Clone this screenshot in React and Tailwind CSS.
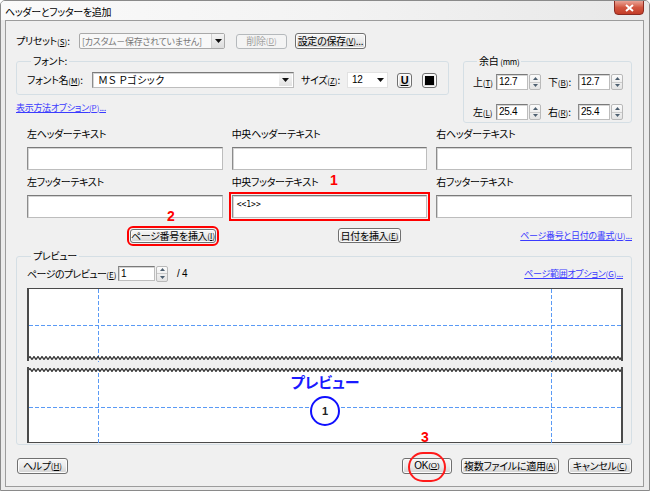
import React from "react";

// wavy edge used by the preview boxes (period 4px)
const WAVE = (() => {
  let d = "M0,3";
  for (let i = 0; i < 150; i++) d += " q1,-2.6 2,0 q1,2.6 2,0";
  return d;
})();

function Mn({ k }) {
  return (
    <span className="text-[8px] tracking-normal">
      (<span className="underline">{k}</span>)
    </span>
  );
}

function Btn({ className = "", disabled = false, children }) {
  return (
    <div
      className={`flex items-center justify-center rounded-[3px] border whitespace-nowrap ${
        disabled
          ? "border-[#b5b9bc] bg-[#f4f4f4] text-[#a0a0a0]"
          : "border-[#707070] bg-linear-to-b from-[#f6f6f6] via-[#ebebeb] to-[#d3d3d3] shadow-[inset_0_0_0_1px_#fcfcfc]"
      } ${className}`}
    >
      {children}
    </div>
  );
}

function Field({ className = "", children }) {
  return (
    <div
      className={`bg-white border border-[#bdbdbd] border-t-[#7a7a7a] border-l-[#8c8c8c] shadow-[inset_1px_1px_0_#d4d4d4] ${className}`}
    >
      {children}
    </div>
  );
}

function Arrow() {
  return (
    <svg width="7" height="4" viewBox="0 0 7 4">
      <path d="M0 0H7L3.5 4Z" fill="#111" />
    </svg>
  );
}

function Spin() {
  return (
    <div className="ml-[1px] w-[12px] h-[16px] flex flex-col border border-[#b9b9b9] rounded-[2px] bg-linear-to-b from-[#fbfbfb] to-[#e4e4e4]">
      <div className="flex-1 flex items-center justify-center border-b border-[#cccccc]">
        <svg width="5" height="3" viewBox="0 0 5 3">
          <path d="M0 3L2.5 0L5 3Z" fill="#4d5f70" />
        </svg>
      </div>
      <div className="flex-1 flex items-center justify-center">
        <svg width="5" height="3" viewBox="0 0 5 3">
          <path d="M0 0L2.5 3L5 0Z" fill="#4d5f70" />
        </svg>
      </div>
    </div>
  );
}

function Dashes({ v1, v2, h, height }) {
  return (
    <svg className="absolute inset-0" width="592" height={height}>
      <g stroke="#5a9af5" strokeWidth="1" strokeDasharray="4 2">
        <line x1={v1} y1="0" x2={v1} y2={height} />
        <line x1={v2} y1="0" x2={v2} y2={height} />
        <line x1="0" y1={h} x2="592" y2={h} />
      </g>
    </svg>
  );
}

export default function App() {
  return (
    <div className="relative w-[650px] h-[491px] overflow-hidden bg-[#ebebeb] border border-[#8a8a8a] rounded-t-[5px] font-['Noto_Sans_CJK_JP',sans-serif] [font-feature-settings:'palt'] text-[10px] tracking-[-0.3px] text-black leading-none">
      {/* Title bar */}
      <div className="h-[19px] flex items-start justify-between bg-linear-to-r from-[#fafafa] via-[#f3f3f3] to-[#e8e8e8]">
        <div className="pl-[4px] pt-[4px] text-[10px] leading-[13px]">ヘッダーとフッターを追加</div>
        <div className="mt-[-1px] mr-[5px] w-[30px] h-[15px] flex items-center justify-center rounded-b-[4px] border border-[#8b2b22] bg-linear-to-b from-[#e9a295] via-[#d25640] to-[#c33c27]">
          <svg width="9" height="8" viewBox="0 0 9 8">
            <path d="M1 1L8 7M8 1L1 7" stroke="#fff" strokeWidth="2" />
          </svg>
        </div>
      </div>

      {/* Dialog body */}
      <div className="ml-[4px] w-[639px] h-[467px] border border-[#9c9c9c] bg-[#f0f0f0] pl-[10px] pt-[12px] pr-[11px]">
        {/* Preset row */}
        <div className="h-[16px] flex items-center">
          <div className="w-[63px] whitespace-nowrap">
            プリセット<Mn k="S" />:
          </div>
          <div className="w-[146px] h-[16px] flex items-center border border-[#a9a9a9] rounded-[2px] bg-[#f8f8f8] text-[#777] pl-[2px] text-[9px]">
            <span className="whitespace-nowrap">[カスタム－保存されていません]</span>
            <div className="ml-auto w-[13px] h-full flex items-center justify-center border-l border-[#d0d0d0] bg-linear-to-b from-[#f4f4f4] to-[#dddddd]">
              <Arrow />
            </div>
          </div>
          <Btn disabled className="ml-[11px] w-[51px] h-[15px]">
            削除<Mn k="D" />
          </Btn>
          <Btn className="ml-[8px] w-[71px] h-[16px]">
            設定の保存<Mn k="V" />...
          </Btn>
        </div>

        {/* Font + margin */}
        <div className="mt-[6px] h-[68px] flex items-start">
          <div className="w-[433px]">
            <fieldset className="h-[40px] border border-[#d5dfe5] rounded-[3px] px-[10px] pt-[5px]">
              <legend className="ml-[4px] px-[2px] leading-[12px]">フォント:</legend>
              <div className="h-[16px] flex items-center">
                <div className="w-[65px] whitespace-nowrap">
                  フォント名<Mn k="M" />:
                </div>
                <Field className="w-[202px] h-[16px] flex items-center pl-[5px]">
                  <span className="tracking-[0.5px]">ＭＳ Ｐゴシック</span>
                  <div className="ml-auto mr-[1px] w-[13px] h-[12px] flex items-center justify-center bg-linear-to-b from-[#f7f7f7] to-[#e2e2e2]">
                    <Arrow />
                  </div>
                </Field>
                <div className="ml-[7px] w-[46px] whitespace-nowrap">
                  サイズ<Mn k="Z" />:
                </div>
                <div className="w-[41px] h-[16px] flex items-center bg-white border border-[#e2e2e2] pl-[4px] font-['Liberation_Sans',sans-serif] text-[10px]">
                  12
                  <div className="ml-auto mr-[3px]">
                    <Arrow />
                  </div>
                </div>
                <Btn className="ml-[9px] w-[15px] h-[15px] font-['Liberation_Sans',sans-serif] font-bold text-[11px]">
                  <span className="underline">U</span>
                </Btn>
                <Btn className="ml-[10px] w-[15px] h-[15px]">
                  <div className="w-[9px] h-[9px] bg-black" />
                </Btn>
              </div>
            </fieldset>
            <div className="mt-[8px] text-[#3b3bff] underline text-[9px] whitespace-nowrap">
              表示方法オプション<Mn k="P" />...
            </div>
          </div>

          <fieldset className="ml-[14px] w-[169px] h-[68px] border border-[#d5dfe5] rounded-[3px] pl-[9px] pt-[6px]">
            <legend className="ml-[4px] px-[2px] leading-[12px]">
              余白 <span className="text-[8px]">(mm)</span>
            </legend>
            {[
              ["上", "T", "12.7", "下", "B", "12.7"],
              ["左", "L", "25.4", "右", "R", "25.4"],
            ].map((r, i) => (
              <div key={i} className={`h-[16px] flex items-center ${i ? "mt-[14px]" : ""}`}>
                <div className="w-[23px] whitespace-nowrap">
                  {r[0]}
                  <Mn k={r[1]} />
                </div>
                <Field className="w-[32px] h-[16px] flex items-center pl-[2px] font-['Liberation_Sans',sans-serif] text-[10px]">
                  {r[2]}
                </Field>
                <Spin />
                <div className="ml-[7px] w-[30px] whitespace-nowrap">
                  {r[3]}
                  <Mn k={r[4]} />:
                </div>
                <Field className="w-[32px] h-[16px] flex items-center pl-[2px] font-['Liberation_Sans',sans-serif] text-[10px]">
                  {r[5]}
                </Field>
                <Spin />
              </div>
            ))}
          </fieldset>
        </div>

        {/* Header / footer text */}
        <div className="mt-[4px] ml-[11px] grid grid-cols-3 gap-x-[9px] gap-y-[5px]">
          {["左ヘッダーテキスト", "中央ヘッダーテキスト", "右ヘッダーテキスト", "左フッターテキスト", "中央フッターテキスト", "右フッターテキスト"].map(
            (label, i) => (
              <div key={label}>
                <div className="h-[14px] leading-[14px] whitespace-nowrap">{label}</div>
                <Field
                  className={`mt-[6px] h-[23px] px-[4px] pt-[5px] font-['DejaVu_Sans_Mono',monospace] text-[8px] tracking-normal ${
                    i === 4 ? "outline-2 outline-offset-[1px] outline-[#ff0000]" : ""
                  }`}
                >
                  {i === 4 ? "<<1>>" : ""}
                </Field>
              </div>
            )
          )}
        </div>

        {/* Insert buttons */}
        <div className="mt-[10px] h-[16px] flex items-start">
          <Btn className="ml-[114px] mt-[1px] w-[86px] h-[14px] outline-2 outline-offset-[1px] outline-[#ff0000]">
            ページ番号を挿入<Mn k="I" />
          </Btn>
          <Btn className="ml-[122px] w-[63px] h-[15px]">
            日付を挿入<Mn k="E" />
          </Btn>
          <div className="ml-auto mt-[3px] text-[#3b3bff] underline text-[9px] whitespace-nowrap">
            ページ番号と日付の書式<Mn k="U" />...
          </div>
        </div>

        {/* Preview */}
        <fieldset className="mt-[6px] h-[195px] border border-[#d5dfe5] rounded-[3px] pl-[10px] pr-[8px] pt-[4px]">
          <legend className="ml-[4px] px-[2px] leading-[12px]">プレビュー</legend>
          <div className="h-[15px] flex items-center">
            <div className="w-[91px] whitespace-nowrap tracking-[-0.6px]">
              ページのプレビュー<Mn k="E" />
            </div>
            <Field className="w-[37px] h-[15px] flex items-center pl-[2px] font-['Liberation_Sans',sans-serif] text-[10px]">
              1
            </Field>
            <Spin />
            <div className="ml-[9px] font-['Liberation_Sans',sans-serif] text-[10px]">/ 4</div>
            <div className="ml-auto text-[#3b3bff] underline text-[9px] whitespace-nowrap">
              ページ範囲オプション<Mn k="G" />...
            </div>
          </div>

          <div className="relative mt-[7px] h-[73px] bg-white border-x-2 border-t border-[#4a4a4a]">
            <Dashes v1={69.5} v2={522.5} h={36.5} height={73} />
            <svg className="absolute left-0 bottom-0" width="592" height="6">
              <path d={`${WAVE} L600,6 L0,6 Z`} fill="#f0f0f0" />
              <path d={WAVE} fill="none" stroke="#1e1e1e" strokeWidth="1.2" />
            </svg>
          </div>

          <div className="relative mt-[6px] h-[76px] bg-white border-x-2 border-b border-[#4a4a4a]">
            <Dashes v1={69.5} v2={522.5} h={40.5} height={76} />
            <svg className="absolute left-0 top-0" width="592" height="6">
              <path d={`${WAVE} L600,0 L0,0 Z`} fill="#f0f0f0" />
              <path d={WAVE} fill="none" stroke="#1e1e1e" strokeWidth="1.2" />
            </svg>
            <div className="relative flex flex-col items-center pt-[7px]">
              <div className="text-[15px] leading-[16px] font-bold tracking-normal text-[#1a1aff]">プレビュー</div>
              <div className="mt-[6px] w-[30px] h-[30px] rounded-full border-2 border-[#1010ff] bg-white flex items-center justify-center font-['Liberation_Sans',sans-serif] font-bold text-[11px] text-[#222]">
                1
              </div>
            </div>
          </div>
        </fieldset>

        {/* Bottom buttons */}
        <div className="mt-[13px] h-[16px] flex items-center">
          <Btn className="ml-[1px] w-[51px] h-[16px]">
            ヘルプ<Mn k="H" />
          </Btn>
          <Btn className="ml-auto w-[50px] h-[16px] font-['Liberation_Sans',sans-serif] text-[10px]">
            OK<Mn k="O" />
          </Btn>
          <Btn className="ml-[9px] w-[98px] h-[16px]">
            複数ファイルに適用<Mn k="A" />
          </Btn>
          <Btn className="ml-[9px] w-[64px] h-[16px]">
            キャンセル<Mn k="C" />
          </Btn>
        </div>
      </div>

      {/* Annotations */}
      <div className="absolute left-[329px] top-[172px] text-[14px] font-bold text-[#ff0000] font-['Liberation_Sans',sans-serif]">1</div>
      <div className="absolute left-[166px] top-[208px] text-[14px] font-bold text-[#ff0000] font-['Liberation_Sans',sans-serif]">2</div>
      <div className="absolute left-[420px] top-[429px] text-[14px] font-bold text-[#ff0000] font-['Liberation_Sans',sans-serif]">3</div>
      <div className="absolute left-[407px] top-[451px] w-[38px] h-[30px] rounded-full border-2 border-[#ff1a1a]" />
    </div>
  );
}
